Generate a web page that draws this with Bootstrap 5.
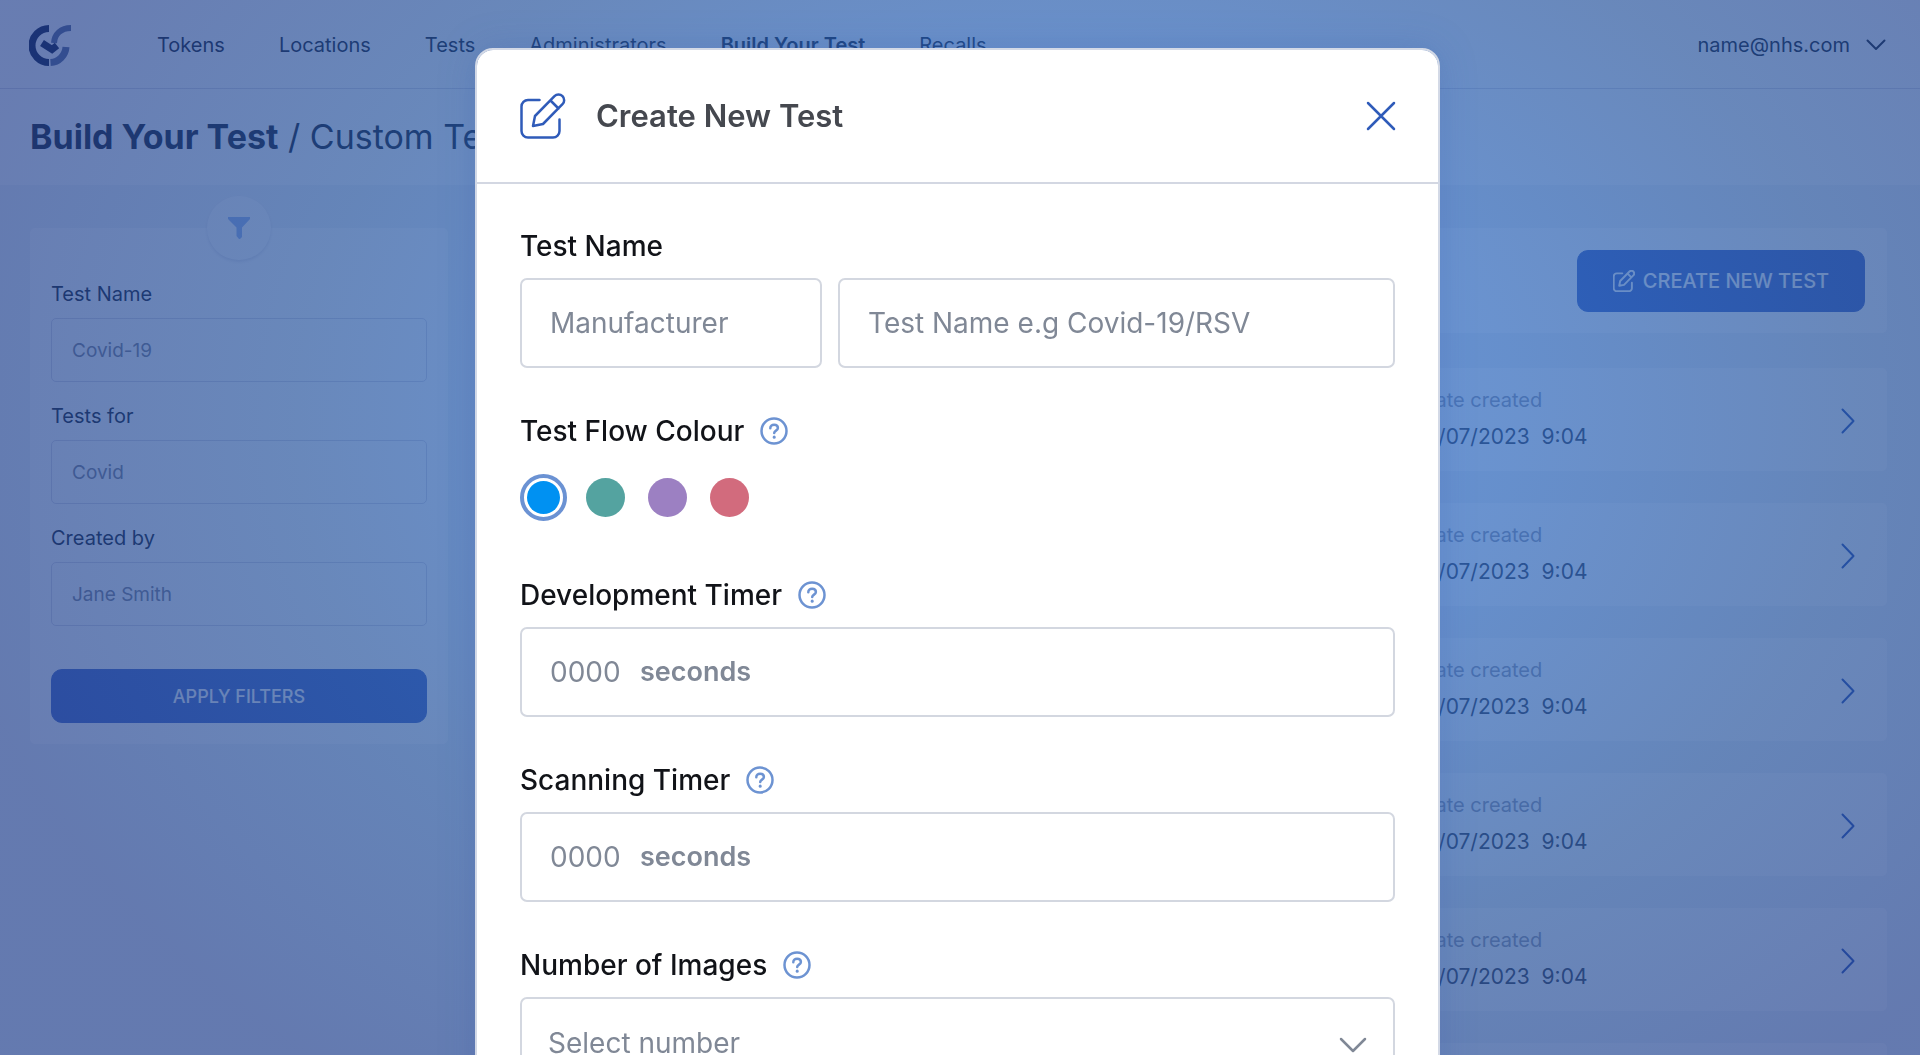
<!DOCTYPE html>
<html lang="en">
<head>
<meta charset="utf-8">
<meta name="viewport" content="width=device-width, initial-scale=1">
<title>Build Your Test</title>
<link href="https://cdn.jsdelivr.net/npm/bootstrap@5.3.0/dist/css/bootstrap.min.css" rel="stylesheet">
<style>
  body { font-family: Inter, "Open Sans", sans-serif; font-size: 20px; color: #2a3040; background: #f4f5f8; height: 100vh; overflow: hidden; }
  .line-icon { fill: none; stroke: currentColor; stroke-linecap: round; stroke-linejoin: round; flex: none; }

  /* page behind the dialog */
  .topbar { height: 89px; padding: 2px 34px 0 29px; border-bottom: 1px solid #dddce8; }
  .topbar-links { gap: 54px; margin-left: 85px; }
  .topbar a { color: #2a3040; text-decoration: none; line-height: 28px; }
  .page-title { font-size: 34px; line-height: 40px; padding: 28px 30px; }
  .layout { display: flex; align-items: flex-start; gap: 30px; padding: 43px 33px 0 30px; }
  .filters { flex: 0 0 418px; position: relative; background: #fff; border-radius: 5px; padding: 54px 21px 21px; }
  .filter-badge { position: absolute; top: -32px; left: 50%; width: 64px; height: 64px; margin-left: -32px; border-radius: 50%; background: #fff; box-shadow: 0 2px 3px rgba(60,60,110,.12); color: #a3bdf0; }
  .filters label { display: block; line-height: 24px; margin-bottom: 12px; }
  .filters .form-control { height: 64px; margin-bottom: 22px; padding: 0 20px; font-size: 19px; border-color: #dddce8; border-radius: 5px; }
  .filters .form-control::placeholder { color: #8a8d9c; }
  .btn-brand { --bs-btn-bg: #5474cb; --bs-btn-color: #fff; --bs-btn-border-color: #5474cb; --bs-btn-border-radius: 11px; --bs-btn-hover-bg: #4564bb; --bs-btn-hover-color: #fff; --bs-btn-font-weight: 500; }
  .btn-apply { height: 54px; margin-top: 21px; font-size: 18px; }
  .btn-create { height: 62px; width: 288px; font-size: 20px; }
  .panel { background: #fff; border-radius: 5px; }
  .panel-actions { height: 105px; padding: 0 22px; margin-bottom: 35px; }
  .test-row { height: 103px; margin-bottom: 32px; padding: 2px 32px 0; color: inherit; text-decoration: none; }
  .test-row-name { width: 911px; }
  .row-caption { font-size: 20px; line-height: 28px; color: #a0a4b4; }
  .row-value { font-size: 21px; line-height: 36px; margin-top: 5px; color: #4a4f60; white-space: pre; }
  .test-row svg { color: #3c5fba; }

  /* dialog */
  .veil { padding-right: 5px; scrollbar-width: none; background: radial-gradient(ellipse 1150px 850px at 56% 40%, rgba(30,102,203,.65) 0%, rgba(26,88,180,.65) 38%, rgba(24,72,150,.65) 68%, rgba(23,55,136,.65) 100%); }
  .veil::-webkit-scrollbar { display: none; }
  .veil .modal-dialog { max-width: 965px; margin: 48px auto; }
  .veil .modal-content { border: 2px solid #d3d9e6; border-radius: 18px; box-shadow: 0 0 36px rgba(50,90,170,.25); }
  .veil .modal-header { height: 134px; padding: 0 42px 0 43px; border-bottom: 2px solid #d3d7e2; color: #2f5bb9; }
  .veil .modal-title { font-size: 31px; line-height: 40px; font-weight: 600; color: #45484f; margin-left: 30px; }
  .plain-btn { border: 0; background: none; padding: 0; line-height: 0; color: inherit; }
  .veil .modal-body { padding: 46px 43px; }
  .field { margin-bottom: 47px; }
  .field-label { font-size: 28px; font-weight: 500; line-height: 32px; color: #111318; }
  .field-head { display: flex; align-items: center; gap: 16px; margin-bottom: 16px; color: #6d93d2; }
  .box-lg { height: 90px; padding: 0 28px; font-size: 28px; border: 2px solid #d3d7e0; border-radius: 7px; color: #808896; }
  .box-lg::placeholder, .box-lg input::placeholder { color: #808896; opacity: 1; }
  .box-maker { flex: 0 0 302px; }
  .timer-box { display: flex; align-items: center; background: #fff; }
  .timer-box input { width: 90px; border: 0; outline: 0; padding: 0; }
  .timer-unit { font-size: 27px; font-weight: 600; }
  .select-lg { --bs-form-select-bg-img: url("data:image/svg+xml,%3csvg xmlns='http://www.w3.org/2000/svg' viewBox='0 0 28 16'%3e%3cpath fill='none' stroke='%23808896' stroke-width='2.5' stroke-linecap='round' stroke-linejoin='round' d='M2 2l12 12L26 2'/%3e%3c/svg%3e"); padding: 2px 26px 0; background-size: 28px 16px; background-position: right 26px top 38px; }
  .swatches { display: flex; gap: 15px; padding: 11px 0; }
  .swatches input { appearance: none; width: 47px; height: 47px; margin: 0; border: 4px solid transparent; padding: 3px; border-radius: 50%; background-clip: padding-box; }
  .swatches input:checked { border-color: #6b92d3; background-clip: content-box; }
  .sw-blue { background-color: #0091f2; }
  .sw-green { background-color: #54a3a0; }
  .sw-purple { background-color: #9c80c2; }
  .sw-red { background-color: #d26b7d; }
</style>
</head>
<body>
<svg class="d-none" aria-hidden="true">
  <symbol id="i-edit" viewBox="0 0 46 46"><path d="M19.500 7H8a6.500 6.500 0 0 0-6.500 6.500V38A6.500 6.500 0 0 0 8 44.500h25a6.500 6.500 0 0 0 6.500-6.500V26.500"/><path d="M13 33l2-10L34.500 3.200a5.600 5.600 0 0 1 8 8L23 31zM30.500 7.500l8 8"/></symbol>
  <symbol id="i-help" viewBox="0 0 28 28"><circle cx="14" cy="14" r="12.500"/><path d="M10.300 11.300c0-2.300 1.600-3.600 3.800-3.600s3.800 1.300 3.800 3.300c0 2.600-3.700 2.600-3.700 5"/><path d="M14.200 20v.2" stroke-width="3"/></symbol>
  <symbol id="i-right" viewBox="0 0 14 26"><path d="M1.500 1.500L12.500 13l-11 11.500"/></symbol>
</svg>

<header>
  <nav class="topbar d-flex align-items-center bg-white" aria-label="Main">
    <a href="#" aria-label="Home">
      <svg width="43" height="44" viewBox="0 0 43 44" fill="none" stroke-width="7">
        <path d="M20 5.500A17 17 0 0 0 20 39.500" stroke="#202c55"/>
        <path d="M21.500 39.500A16.500 16.500 0 0 0 37 24" stroke="#69779f"/>
        <path d="M25 20C25.500 11 32 5 42 5" stroke="#69779f" stroke-width="6"/>
        <path d="M13 20L23 26.500 28 22.500" stroke="#202c55" stroke-width="7"/>
      </svg>
    </a>
    <ul class="topbar-links list-unstyled d-flex mb-0">
      <li><a href="#">Tokens</a></li>
      <li><a href="#">Locations</a></li>
      <li><a href="#">Tests</a></li>
      <li><a href="#">Administrators</a></li>
      <li><a href="#" class="fw-semibold" aria-current="page">Build Your Test</a></li>
      <li><a href="#">Recalls</a></li>
    </ul>
    <a href="#" class="ms-auto d-flex align-items-center gap-3">name@nhs.com
      <svg class="line-icon" width="20" height="12" viewBox="0 0 20 12" stroke-width="2"><path d="M1.500 1.500L10 10l8.500-8.500"/></svg>
    </a>
  </nav>
  <h1 class="page-title bg-white mb-0 fw-normal"><b>Build Your Test</b> / Custom Tests</h1>
</header>

<main class="layout">
  <form class="filters">
    <span class="filter-badge d-flex align-items-center justify-content-center">
      <svg width="22" height="22" viewBox="0 0 22 22" fill="currentColor"><path d="M0 0h22v2l-8 8.500V20l-2 2H11l-2.500-3v-8.500L0 2z"/></svg>
    </span>
    <label for="f-name">Test Name</label>
    <input id="f-name" class="form-control" placeholder="Covid-19">
    <label for="f-for">Tests for</label>
    <input id="f-for" class="form-control" placeholder="Covid">
    <label for="f-by">Created by</label>
    <input id="f-by" class="form-control" placeholder="Jane Smith">
    <button type="button" class="btn btn-brand btn-apply w-100">APPLY FILTERS</button>
  </form>
  <section class="flex-grow-1">
    <div class="panel panel-actions d-flex align-items-center justify-content-end">
      <button type="button" class="btn btn-brand btn-create d-flex align-items-center justify-content-center gap-2">
        <svg class="line-icon" width="22" height="22" stroke-width="4"><use href="#i-edit"/></svg>CREATE NEW TEST
      </button>
    </div>
    <a href="#" class="panel test-row d-flex align-items-center"><span class="test-row-name"></span><span><span class="row-caption d-block">Date created</span><span class="row-value d-block">11/07/2023  9:04</span></span><svg class="line-icon ms-auto" width="14" height="26" stroke-width="2"><use href="#i-right"/></svg></a>
    <a href="#" class="panel test-row d-flex align-items-center"><span class="test-row-name"></span><span><span class="row-caption d-block">Date created</span><span class="row-value d-block">11/07/2023  9:04</span></span><svg class="line-icon ms-auto" width="14" height="26" stroke-width="2"><use href="#i-right"/></svg></a>
    <a href="#" class="panel test-row d-flex align-items-center"><span class="test-row-name"></span><span><span class="row-caption d-block">Date created</span><span class="row-value d-block">11/07/2023  9:04</span></span><svg class="line-icon ms-auto" width="14" height="26" stroke-width="2"><use href="#i-right"/></svg></a>
    <a href="#" class="panel test-row d-flex align-items-center"><span class="test-row-name"></span><span><span class="row-caption d-block">Date created</span><span class="row-value d-block">11/07/2023  9:04</span></span><svg class="line-icon ms-auto" width="14" height="26" stroke-width="2"><use href="#i-right"/></svg></a>
    <a href="#" class="panel test-row d-flex align-items-center"><span class="test-row-name"></span><span><span class="row-caption d-block">Date created</span><span class="row-value d-block">11/07/2023  9:04</span></span><svg class="line-icon ms-auto" width="14" height="26" stroke-width="2"><use href="#i-right"/></svg></a>
    <div class="panel test-row"></div>
  </section>
</main>

<div class="modal veil d-block" role="dialog" aria-modal="true" aria-labelledby="dlg-title">
  <div class="modal-dialog">
    <form class="modal-content">
      <div class="modal-header">
        <svg class="line-icon" width="46" height="46" stroke-width="2.500"><use href="#i-edit"/></svg>
        <h2 class="modal-title" id="dlg-title">Create New Test</h2>
        <button type="button" class="plain-btn ms-auto" aria-label="Close"><svg class="line-icon" width="30" height="30" viewBox="0 0 30 30" stroke-width="2.500"><path d="M2 2l26 26M28 2L2 28"/></svg></button>
      </div>
      <div class="modal-body">
        <div class="field">
          <div class="field-head"><label class="field-label" for="maker">Test Name</label></div>
          <div class="d-flex gap-3">
            <input id="maker" class="form-control box-lg box-maker" placeholder="Manufacturer">
            <input class="form-control box-lg" aria-label="Test Name" placeholder="Test Name e.g Covid-19/RSV">
          </div>
        </div>
        <div class="field" role="radiogroup" aria-labelledby="colour-label">
          <div class="field-head"><span class="field-label" id="colour-label">Test Flow Colour</span><button type="button" class="plain-btn" aria-label="Help"><svg class="line-icon" width="28" height="28" stroke-width="2.500"><use href="#i-help"/></svg></button></div>
          <div class="swatches">
            <input type="radio" name="colour" class="sw-blue" aria-label="Blue" checked>
            <input type="radio" name="colour" class="sw-green" aria-label="Green">
            <input type="radio" name="colour" class="sw-purple" aria-label="Purple">
            <input type="radio" name="colour" class="sw-red" aria-label="Red">
          </div>
        </div>
        <div class="field">
          <div class="field-head"><label class="field-label" for="dev">Development Timer</label><button type="button" class="plain-btn" aria-label="Help"><svg class="line-icon" width="28" height="28" stroke-width="2.500"><use href="#i-help"/></svg></button></div>
          <div class="box-lg timer-box"><input id="dev" placeholder="0000"><span class="timer-unit">seconds</span></div>
        </div>
        <div class="field">
          <div class="field-head"><label class="field-label" for="scan">Scanning Timer</label><button type="button" class="plain-btn" aria-label="Help"><svg class="line-icon" width="28" height="28" stroke-width="2.500"><use href="#i-help"/></svg></button></div>
          <div class="box-lg timer-box"><input id="scan" placeholder="0000"><span class="timer-unit">seconds</span></div>
        </div>
        <div class="field">
          <div class="field-head"><label class="field-label" for="images">Number of Images</label><button type="button" class="plain-btn" aria-label="Help"><svg class="line-icon" width="28" height="28" stroke-width="2.500"><use href="#i-help"/></svg></button></div>
          <select id="images" class="form-select box-lg select-lg"><option>Select number</option></select>
        </div>
      </div>
    </form>
  </div>
</div>
<script src="https://cdn.jsdelivr.net/npm/bootstrap@5.3.0/dist/js/bootstrap.bundle.min.js"></script>
</body>
</html>
